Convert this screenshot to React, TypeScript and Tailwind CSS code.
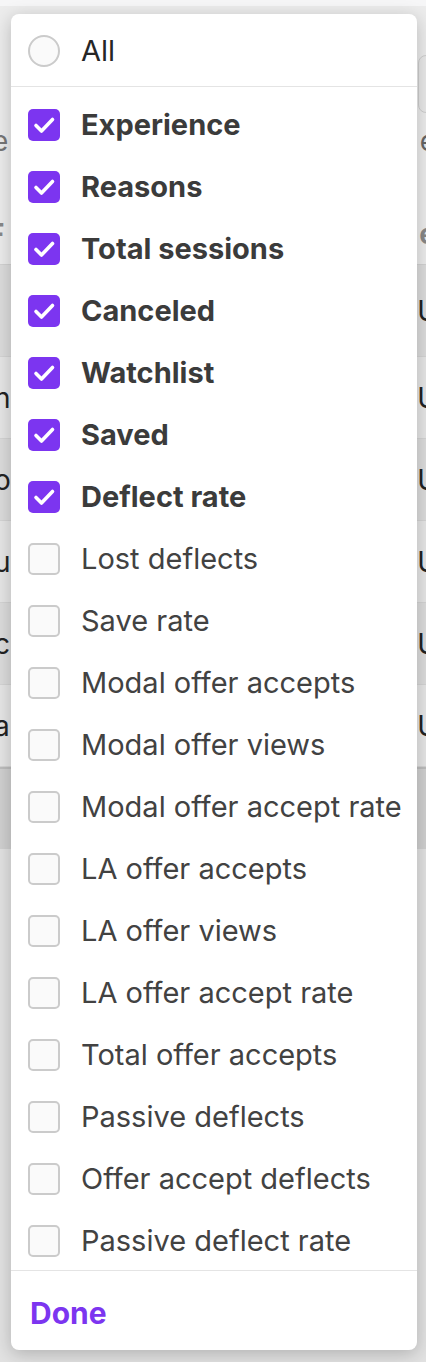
import React, { useState } from 'react';

const columns = [
  'Experience',
  'Reasons',
  'Total sessions',
  'Canceled',
  'Watchlist',
  'Saved',
  'Deflect rate',
  'Lost deflects',
  'Save rate',
  'Modal offer accepts',
  'Modal offer views',
  'Modal offer accept rate',
  'LA offer accepts',
  'LA offer views',
  'LA offer accept rate',
  'Total offer accepts',
  'Passive deflects',
  'Offer accept deflects',
  'Passive deflect rate',
];

const defaultChecked = ['Experience', 'Reasons', 'Total sessions', 'Canceled', 'Watchlist', 'Saved', 'Deflect rate'];

// rows of the table that sits behind the menu (only the edges show)
const tableRows = [
  { left: '', right: 'U' },
  { left: 'n', right: 'U' },
  { left: 'o', right: 'U' },
  { left: 'us', right: 'U' },
  { left: 'c', right: 'U' },
  { left: 'a', right: 'U' },
];

function CheckBox({ checked }: { checked: boolean }) {
  if (checked) {
    return (
      <span className="flex h-[32px] w-[32px] shrink-0 items-center justify-center rounded-[5px] bg-[#7c35f0]">
        <svg width="32" height="32" viewBox="0 0 32 32" fill="none">
          <path d="M8 16.5L13.5 22L24.5 10.5" stroke="white" strokeWidth="3.6" strokeLinecap="round" strokeLinejoin="round" />
        </svg>
      </span>
    );
  }
  return <span className="h-[32px] w-[32px] shrink-0 rounded-[5px] border-2 border-[#cbcbcb] bg-[#fafafa]" />;
}

function PageBehind() {
  return (
    <div className="flex h-[1362px] flex-col overflow-hidden bg-[#ececec] text-[28px] text-[#555]" style={{ fontFamily: 'Inter, "Liberation Sans", sans-serif' }}>
      <div className="h-[6px] bg-[#f6f6f7]" />
      <div className="h-[49px]" />
      <div className="flex h-[58px] justify-end">
        <span className="mr-[-10px] h-[58px] w-[18px] rounded-l-[8px] border border-[#cfcfcf] bg-[#e9e9e9]" />
      </div>
      <div className="flex h-[56px] items-center justify-between">
        <span className="ml-[-8px] text-[#777]">e</span>
        <span className="mr-[-10px] text-[#666]">e</span>
      </div>
      <div className="h-[50px]" />
      <div className="flex h-[30px] items-center justify-between font-bold text-[#888]">
        <span className="ml-[-12px]">F</span>
        <span className="mr-[-10px]">e</span>
      </div>
      <div className="h-[16px] border-b border-[#d2d2d2]" />
      {tableRows.map((row, i) => (
        <div
          key={i}
          className={`flex items-center justify-between border-b border-[#d4d4d4] ${i === 0 ? 'h-[92px]' : 'h-[82px]'} ${i % 2 === 0 ? 'bg-[#dcdcdc]' : 'bg-[#e6e6e6]'}`}
        >
          <span className="ml-[-6px] text-[#222]">{row.left}</span>
          <span className="mr-[-12px] text-[#222]">{row.right}</span>
        </div>
      ))}
      <div className="h-[82px] border-t-2 border-[#bdbdbd] bg-[#d0d0d0]" />
      <div className="flex-1 bg-[#e2e2e2]" />
    </div>
  );
}

export default function App() {
  const [checked, setChecked] = useState<string[]>(defaultChecked);

  const toggle = (name: string) => {
    setChecked((prev) => (prev.includes(name) ? prev.filter((c) => c !== name) : [...prev, name]));
  };

  return (
    <div className="relative h-[1362px] w-full overflow-hidden">
      <PageBehind />

      <div
        className="absolute left-[11px] top-[14px] w-[406px] rounded-[8px] bg-white shadow-[0_4px_18px_rgba(0,0,0,0.22)]"
        style={{ fontFamily: 'Inter, "Liberation Sans", sans-serif' }}
      >
        <div className="flex h-[73px] items-center gap-[21px] border-b border-[#e4e4e4] pl-[17px] pt-[2px]">
          <span className="h-[32px] w-[32px] rounded-full border-2 border-[#cbcbcb] bg-[#fafafa]" />
          <span className="text-[29px] text-[#262626]">All</span>
        </div>

        <div className="pt-[5px]">
          {columns.map((name) => {
            const on = checked.includes(name);
            return (
              <div
                key={name}
                onClick={() => toggle(name)}
                className="flex h-[62px] cursor-pointer items-center gap-[21px] pl-[17px] pt-[3px]"
              >
                <CheckBox checked={on} />
                <span className={`whitespace-nowrap text-[29px] ${on ? 'font-bold text-[#3b3b3b]' : 'text-[#424242]'}`}>
                  {name}
                </span>
              </div>
            );
          })}
        </div>

        <div className="flex h-[80px] items-center border-t border-[#e4e4e4] pl-[19px] pt-[5px]">
          <span className="text-[30px] font-bold text-[#7c35f0]">Done</span>
        </div>
      </div>
    </div>
  );
}
